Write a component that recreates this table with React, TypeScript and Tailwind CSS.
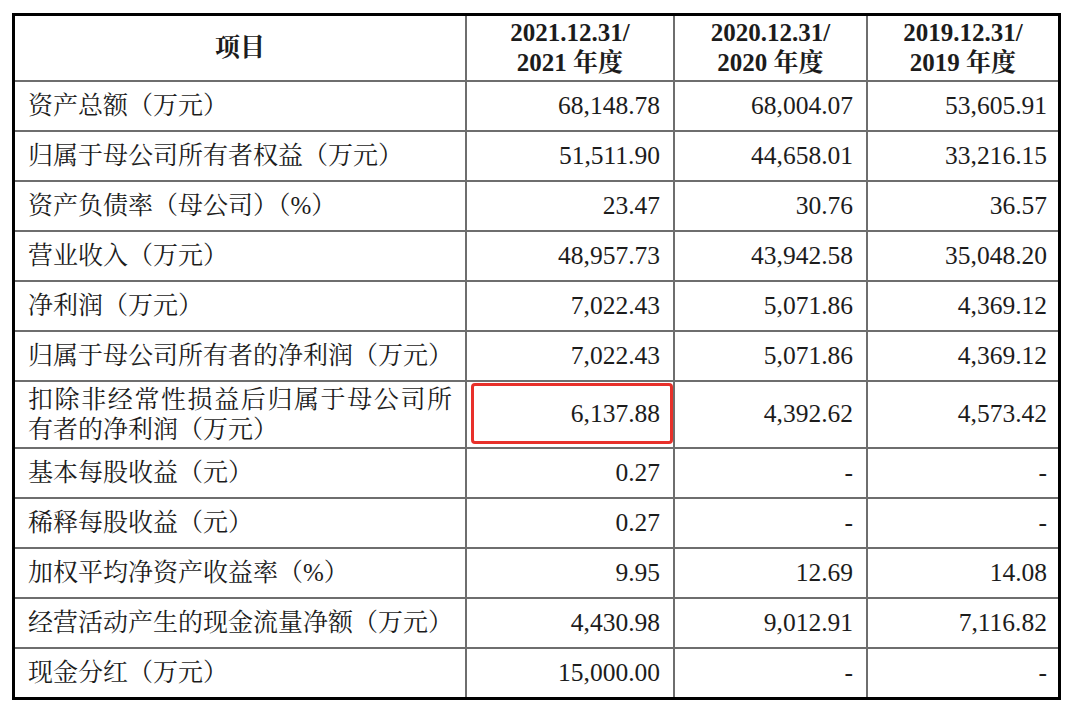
import React from "react";

const rows: { label: React.ReactNode; values: string[]; tall?: boolean; highlight?: boolean }[] = [
  { label: "资产总额（万元）", values: ["68,148.78", "68,004.07", "53,605.91"] },
  { label: "归属于母公司所有者权益（万元）", values: ["51,511.90", "44,658.01", "33,216.15"] },
  { label: "资产负债率（母公司）（%）", values: ["23.47", "30.76", "36.57"] },
  { label: "营业收入（万元）", values: ["48,957.73", "43,942.58", "35,048.20"] },
  { label: "净利润（万元）", values: ["7,022.43", "5,071.86", "4,369.12"] },
  { label: "归属于母公司所有者的净利润（万元）", values: ["7,022.43", "5,071.86", "4,369.12"] },
  {
    label: (
      <div className="leading-[30px]">
        <div className="w-[424px] whitespace-nowrap text-justify [text-align-last:justify]">
          扣除非经常性损益后归属于母公司所
        </div>
        <div className="whitespace-nowrap">有者的净利润（万元）</div>
      </div>
    ),
    values: ["6,137.88", "4,392.62", "4,573.42"],
    tall: true,
    highlight: true,
  },
  { label: "基本每股收益（元）", values: ["0.27", "-", "-"] },
  { label: "稀释每股收益（元）", values: ["0.27", "-", "-"] },
  { label: "加权平均净资产收益率（%）", values: ["9.95", "12.69", "14.08"] },
  { label: "经营活动产生的现金流量净额（万元）", values: ["4,430.98", "9,012.91", "7,116.82"] },
  { label: "现金分红（万元）", values: ["15,000.00", "-", "-"] },
];

const font =
  "font-['Liberation_Serif','Noto_Serif_CJK_SC','Noto_Sans_CJK_SC',serif]";

export default function App() {
  return (
    <div className={`w-[1080px] h-[714px] bg-white overflow-hidden pt-[13px] pl-[12px] text-[#1c1c1c] ${font}`}>
      <div className="w-[1049px] border-[3px] border-black">
        {/* header */}
        <div className="grid grid-cols-[450px_208px_193px_192px] h-[64px] font-bold text-[25px] leading-[30px]">
          <div className="flex items-center justify-center">项目</div>
          {[
            ["2021.12.31/", "2021 年度"],
            ["2020.12.31/", "2020 年度"],
            ["2019.12.31/", "2019 年度"],
          ].map((h, i) => (
            <div
              key={i}
              className="flex flex-col items-center justify-center border-l-2 border-[#6e6e6e]"
            >
              <div>{h[0]}</div>
              <div>{h[1]}</div>
            </div>
          ))}
        </div>
        {rows.map((r, ri) => (
          <div
            key={ri}
            className={`grid grid-cols-[450px_208px_193px_192px] border-t-2 border-[#6e6e6e] text-[25px] ${
              r.tall ? "h-[67px]" : "h-[50px]"
            }`}
          >
            <div className="flex items-center pl-[13px] whitespace-nowrap">{r.label}</div>
            {r.values.map((v, vi) => (
              <div
                key={vi}
                className={`relative flex items-center justify-end border-l-2 border-[#6e6e6e] text-[25.5px] ${
                  vi === 2 ? "pr-[11px]" : "pr-[13px]"
                }`}
              >
                {v}
                {r.highlight && vi === 0 && (
                  <div className="absolute left-[4px] right-0 top-[1px] bottom-[3px] border-[3px] border-[#e8302a] rounded-[4px]" />
                )}
              </div>
            ))}
          </div>
        ))}
      </div>
    </div>
  );
}
